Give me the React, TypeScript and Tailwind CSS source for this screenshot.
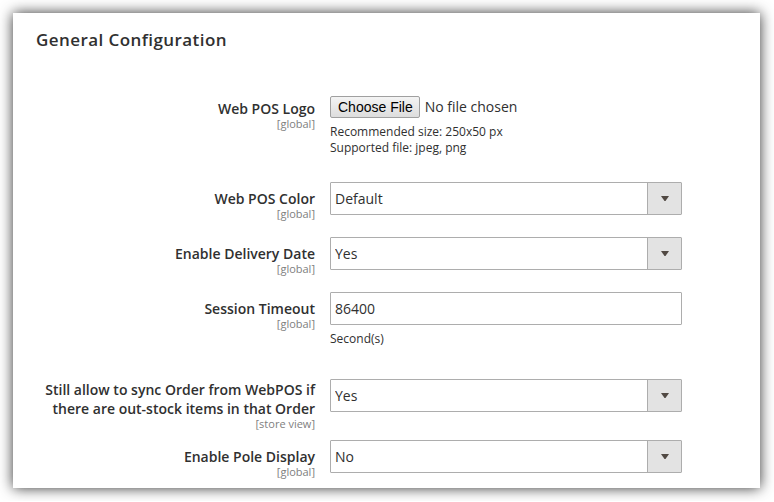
import type { ReactNode } from "react";

type RowProps = {
  id: string;
  label: string;
  scope: string;
  className?: string;
  labelClassName?: string;
  children: ReactNode;
};

function Row({ id, label, scope, className = "", labelClassName = "pt-[7px]", children }: RowProps) {
  return (
    <div className={`flex items-start gap-[15px] ${className}`}>
      <label htmlFor={id} className={`block w-[279px] shrink-0 text-right ${labelClassName}`}>
        <span className="block text-[14px] leading-[19px] font-semibold text-[#303030]">{label}</span>
        <span className="block text-[11px] leading-3 text-[#808080]">{scope}</span>
      </label>
      <div className="max-w-[352px] min-w-0 flex-1">{children}</div>
    </div>
  );
}

function Select({ id, options, value }: { id: string; options: string[]; value: string }) {
  return (
    <div className="relative">
      <select
        id={id}
        defaultValue={value}
        className="block h-[33px] w-full appearance-none rounded-[1px] border border-[#adadad] bg-white pr-10 pl-1 text-[14px] text-[#303030]"
      >
        {options.map((option) => (
          <option key={option}>{option}</option>
        ))}
      </select>
      <span className="pointer-events-none absolute inset-y-px right-px flex w-[34px] items-center justify-center border-l border-[#adadad] bg-[#e3e3e3]">
        <svg width="8" height="5" viewBox="0 0 8 5" aria-hidden="true">
          <path d="M0 0h8L4.5 5h-1z" fill="#514943" />
        </svg>
      </span>
    </div>
  );
}

export default function App() {
  return (
    <div className="bg-white p-[13px] pr-[14px] font-['Open_Sans','Noto_Sans',sans-serif]">
      <form className="bg-white px-[23px] pt-[17px] pb-[10px] shadow-[0_0_13px_rgba(0,0,0,0.8)]">
        <h1 className="text-[17px] leading-5 font-semibold tracking-wide text-[#303030]">General Configuration</h1>

        <Row id="logo" label="Web POS Logo" scope="[global]" className="mt-[46px]" labelClassName="pt-[3px]">
          <input
            id="logo"
            type="file"
            accept="image/jpeg,image/png"
            className="block h-[22px] w-full text-[14px] leading-[22px] text-[#303030] file:mr-[5px] file:h-[22px] file:rounded-[2px] file:border file:border-solid file:border-[#a0a0a0] file:bg-linear-to-b file:from-[#f4f4f4] file:to-[#dddddd] file:pr-[6px] file:pl-[7px] file:font-['Liberation_Sans',sans-serif] file:text-[14px] file:leading-5 file:text-black"
          />
          <p className="mt-[6px] text-[12px] leading-4 text-[#303030]">
            Recommended size: 250x50 px
            <br />
            Supported file: jpeg, png
          </p>
        </Row>

        <Row id="color" label="Web POS Color" scope="[global]" className="mt-[26px]">
          <Select id="color" options={["Default"]} value="Default" />
        </Row>

        <Row id="delivery" label="Enable Delivery Date" scope="[global]" className="mt-[17px]">
          <Select id="delivery" options={["Yes", "No"]} value="Yes" />
        </Row>

        <Row id="timeout" label="Session Timeout" scope="[global]" className="mt-[17px]">
          <input
            id="timeout"
            type="text"
            defaultValue="86400"
            className="block h-[33px] w-full rounded-[1px] border border-[#adadad] bg-white px-1 text-[14px] text-[#303030]"
          />
          <p className="mt-[6px] text-[12px] leading-4 text-[#303030]">Second(s)</p>
        </Row>

        <Row
          id="sync"
          label="Still allow to sync Order from WebPOS if there are out-stock items in that Order"
          scope="[store view]"
          className="mt-8"
          labelClassName="pt-px"
        >
          <Select id="sync" options={["Yes", "No"]} value="Yes" />
        </Row>

        <Row id="pole" label="Enable Pole Display" scope="[global]" className="mt-[10px]">
          <Select id="pole" options={["Yes", "No"]} value="No" />
        </Row>
      </form>
    </div>
  );
}
